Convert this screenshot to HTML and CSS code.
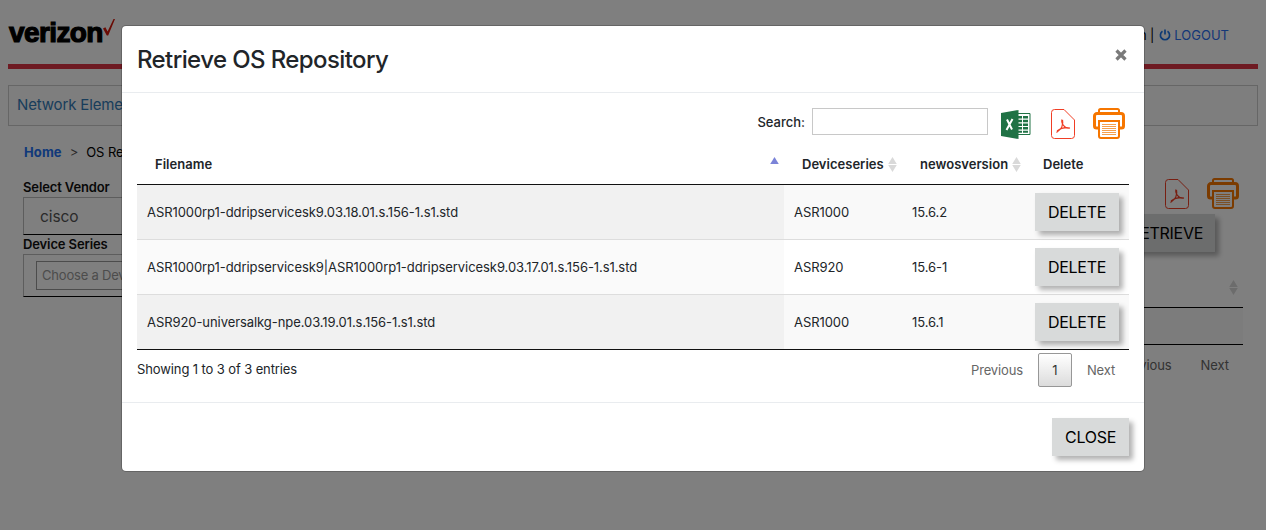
FILE: index.html
```html
<!DOCTYPE html>
<html lang="en">
<head>
<meta charset="utf-8">
<title>OS Repository</title>
<link rel="stylesheet" href="styles.css">
</head>
<body>
<svg class="symbols" width="0" height="0">
  <symbol id="pdf" viewBox="0 0 24 30">
    <path d="M3.500.5H13L23.500 11v15.500a3 3 0 0 1-3 3h-17a3 3 0 0 1-3-3v-23a3 3 0 0 1 3-3z" fill="none" stroke="#f03e25"/>
    <path d="M11 10.500c-1 3 1 5.500 2.500 7s3.500 2 5.500 1.500M11.500 11c1 4-1 9-6 12.500M6 22c4-3 8-4 13-3" fill="none" stroke="#f03e25" stroke-width="1.200"/>
  </symbol>
  <symbol id="printer" viewBox="0 0 32 31">
    <path d="M6 5V2.500a1.500 1.500 0 0 1 1.500-1.500h17a1.500 1.500 0 0 1 1.500 1.500V5" fill="none" stroke="#f67600" stroke-width="2"/>
    <path d="M6 20H3.500a2 2 0 0 1-2-2V8a2.500 2.500 0 0 1 2.500-2.500h24a2.500 2.500 0 0 1 2.500 2.500v10a2 2 0 0 1-2 2H26" fill="none" stroke="#f67600" stroke-width="3"/>
    <path d="M6 13h20v15a2 2 0 0 1-2 2H8a2 2 0 0 1-2-2z" fill="#fff" stroke="#f67600" stroke-width="2"/>
    <path d="M9 16.500h14M9 18.500h14M9 20.500h14M9 22.500h14M9 24.500h14M9 26.500h14" stroke="#f6a04d"/>
  </symbol>
  <symbol id="sort" viewBox="0 0 8 14">
    <path d="M4 0l4 6.500H0zM4 14l4-6.500H0z" fill="#d9d9d9"/>
  </symbol>
</svg>

<div class="page">
  <header class="top">
    <div class="logo"><span class="wordmark">verizon</span><svg width="13" height="17" viewBox="0 0 13 17"><path d="M0 9.500l2.400-1.300 2.200 4.300L10.500 0H12L5.200 16.500H3.800z" fill="#d5180b"/></svg></div>
    <div class="account"><span>Admin |</span><a><svg width="12" height="12" viewBox="0 0 11 12"><path d="M3 2.300a4.600 4.600 0 1 0 5 0M5.500.5v5" fill="none" stroke="#1a74e8" stroke-width="1.700"/></svg>LOGOUT</a></div>
  </header>
  <nav class="menu">Network Elements</nav>
  <div class="crumbs"><b>Home</b><i>&gt;</i><span>OS Repo</span></div>
  <main class="work">
    <section class="filters">
      <label>Select Vendor</label>
      <div class="select">cisco</div>
      <label>Device Series</label>
      <div class="chooser"><div class="choice">Choose a Device</div></div>
    </section>
    <section class="results">
      <div class="result-tools"><svg width="24" height="30"><use href="#pdf"/></svg><svg width="32" height="31"><use href="#printer"/></svg></div>
      <div class="retrieve"><button class="btn">RETRIEVE</button></div>
      <div class="result-head"><svg width="9" height="15"><use href="#sort"/></svg></div>
      <div class="result-row"></div>
      <div class="result-pager"><span>Previous</span><span>Next</span></div>
    </section>
  </main>
</div>

<div class="backdrop">
  <div class="modal">
    <div class="modal-head"><h1>Retrieve OS Repository</h1><svg class="x" width="12" height="12" viewBox="0 0 12 12"><path d="M1.500 1.500l9 9M10.500 1.500l-9 9" stroke="#7a7a7a" stroke-width="3.200"/></svg></div>
    <div class="modal-body">
      <div class="tools">
        <span class="search-label">Search:</span><input class="search" type="text">
        <svg class="excel" width="30" height="29" viewBox="0 0 30 29">
          <path d="M16 3.500h13v21H16" fill="#fff" stroke="#207245"/>
          <path d="M17 6h4v2.500h-4zM22 6h5v2.500h-5zM17 9.700h4v2.500h-4zM22 9.700h5v2.500h-5zM17 13.400h4v2.500h-4zM22 13.400h5v2.500h-5zM17 17.100h4v2.500h-4zM22 17.100h5v2.500h-5zM17 20.700h4v2h-4zM22 20.700h5v2h-5z" fill="#207245"/>
          <path d="M0 3L17.500 0v29L0 26z" fill="#207245"/>
          <path d="M6 9.500l5 10M11.500 9L5.500 20" stroke="#fff" stroke-width="2"/>
        </svg>
        <svg class="pdf" width="24" height="30"><use href="#pdf"/></svg>
        <svg class="print" width="32" height="31"><use href="#printer"/></svg>
      </div>
      <div class="row head">
        <div class="first"><span>Filename</span><svg width="9" height="15" viewBox="0 0 8 14"><path d="M4 0l4 6.500H0z" fill="#7b84d8"/></svg></div>
        <div><span>Deviceseries</span><svg width="9" height="15"><use href="#sort"/></svg></div>
        <div><span>newosversion</span><svg width="9" height="15"><use href="#sort"/></svg></div>
        <div><span>Delete</span></div>
      </div>
      <div class="row odd"><div>ASR1000rp1-ddripservicesk9.03.18.01.s.156-1.s1.std</div><div>ASR1000</div><div>15.6.2</div><div><button class="btn">DELETE</button></div></div>
      <div class="row"><div>ASR1000rp1-ddripservicesk9|ASR1000rp1-ddripservicesk9.03.17.01.s.156-1.s1.std</div><div>ASR920</div><div>15.6-1</div><div><button class="btn">DELETE</button></div></div>
      <div class="row odd last"><div>ASR920-universalkg-npe.03.19.01.s.156-1.s1.std</div><div>ASR1000</div><div>15.6.1</div><div><button class="btn">DELETE</button></div></div>
      <div class="foot"><span class="info">Showing 1 to 3 of 3 entries</span><div class="pager"><span>Previous</span><span class="current">1</span><span>Next</span></div></div>
    </div>
    <div class="modal-foot"><button class="btn close">CLOSE</button></div>
  </div>
</div>
</body>
</html>
```
FILE: styles.css
```css
* { box-sizing: border-box; }
html, body { height: 100%; }
body { margin: 0; overflow: hidden; background: #fff; color: #212529; font: 13px/20px Inter, "Liberation Sans", sans-serif; letter-spacing: -.07px; }
svg { display: block; flex: none; }
.symbols { position: absolute; }
.page { padding: 0 8px; }

.top { display: flex; justify-content: space-between; height: 69px; border-bottom: 5px solid #dc3545; }
.logo { display: flex; align-items: flex-start; padding-top: 19px; }
.wordmark { width: 95px; margin-top: -1px; padding-left: 1px; font: bold 28px/30px "Liberation Sans", Arial, sans-serif; letter-spacing: -.6px; color: #000; -webkit-text-stroke: 1.200px #000; }
.account { display: flex; align-items: flex-start; gap: 4px; padding: 25px 30px 0 0; color: #000; }
.account span { margin-right: 1px; }
.account a { display: flex; align-items: center; gap: 3px; margin-right: -1px; letter-spacing: 0; color: #2b6ff0; }
.menu { height: 41px; margin-top: 16px; padding: 9px 8px; border: 1px solid #ccc; background: #fcfcfc; font-size: 15px; letter-spacing: -.15px; color: #337ab7; }
.crumbs { display: flex; gap: 8px; padding: 16px 0 0 16px; color: #000; }
.crumbs b { letter-spacing: .1px; color: #2272f5; font-weight: 700; }
.crumbs i { font-style: normal; color: #555; }

.work { display: flex; justify-content: space-between; padding: 15px 15px 0; }
.filters { width: 300px; }
.filters label { display: block; height: 20px; font-weight: 600; letter-spacing: -.12px; color: #111; }
.select { height: 38px; padding: 9px 16px; border: 1px solid #bbb; border-bottom-color: #000; font-size: 15.500px; color: #555; }
.filters .select + label { height: 19px; line-height: 19px; }
.chooser { height: 43px; padding: 6px 12px; border: 1px solid #bbb; border-bottom-color: #000; }
.choice { height: 29px; padding: 3px 5px; border: 1px solid #999; letter-spacing: -.2px; color: #999; }
.results { width: 500px; }
.result-tools { display: flex; justify-content: flex-end; gap: 18px; padding: 2px 4px 0 0; }
.result-tools svg { margin-top: -1px; }
.result-tools svg:first-child { margin-top: 0; }
.retrieve { display: flex; justify-content: flex-end; padding: 5px 28px 0 0; }
.result-head { display: flex; justify-content: flex-end; height: 56px; padding: 28px 5px 0 0; border-bottom: 1px solid #000; }
.result-row { height: 37px; background: #f9f9f9; border-bottom: 1px solid #000; }
.result-pager { display: flex; justify-content: flex-end; gap: 29px; padding: 10px 14px 0 0; color: #666; }

.btn { height: 38px; padding: 0 12px; border: 0; border-radius: 0; background: #d8dada; box-shadow: 4px 4px 5px rgba(0, 0, 0, .3); color: #000; font: 16px/38px Inter, "Liberation Sans", sans-serif; letter-spacing: -.3px; white-space: nowrap; }

.backdrop { position: absolute; inset: 0; padding: 25px 121px; background: rgba(0, 0, 0, .5); }
.modal { height: 447px; border: 1px solid rgba(0, 0, 0, .2); border-radius: 5px; background: #fff; background-clip: padding-box; }
.modal-head { display: flex; justify-content: space-between; height: 67px; padding: 19px 17px 0 15px; border-bottom: 1px solid #e9ecef; }
.modal-head h1 { margin: 0; font-size: 24px; line-height: 30px; font-weight: 500; letter-spacing: -.6px; }
.x { margin-top: 4px; }
.modal-body { height: 310px; padding: 15px; border-bottom: 1px solid #e9ecef; }
.tools { display: flex; justify-content: flex-end; height: 39px; padding-right: 4px; }
.search-label { padding: 4px 7px 0 0; font-weight: 500; letter-spacing: 0; }
.search { width: 176px; height: 27px; border: 1px solid #c8c8c8; background: #fff; }
.excel { margin: 2px 0 0 13px; }
.pdf { margin: 1px 0 0 20px; }
.print { margin-left: 18px; }
.row { display: grid; grid-template-columns: 647px 118px 123px 104px; height: 55px; border-bottom: 1px solid #ddd; }
.row > div { display: flex; align-items: center; padding-left: 10px; }
.row > div:first-child { background: #fafafa; }
.odd { background: #f9f9f9; }
.row.odd > div:first-child { background: #f1f1f1; }
.row.last { border-bottom-color: #111; }
.row .btn { width: 84px; padding: 0; }
.row.head { height: 38px; border-bottom-color: #111; font-weight: 600; letter-spacing: .02px; }
.head > div { gap: 4px; padding: 0 0 3px 18px; }
.row.head > div:first-child { background: #fff; }
.row.head .first { justify-content: space-between; padding-right: 5px; }
.foot { display: flex; justify-content: space-between; }
.info { padding-top: 9px; letter-spacing: -.11px; }
.pager { display: flex; gap: 15px; padding: 3px 14px 0 0; line-height: 35px; letter-spacing: -.15px; color: #666; }
.current { width: 34px; height: 34px; border: 1px solid #979797; border-radius: 2px; background: linear-gradient(#fff, #dcdcdc); text-align: center; line-height: 33px; color: #333; }
.modal-foot { display: flex; justify-content: flex-end; padding: 15px 15px 0; }
.close { width: 77px; padding: 0; }
```
